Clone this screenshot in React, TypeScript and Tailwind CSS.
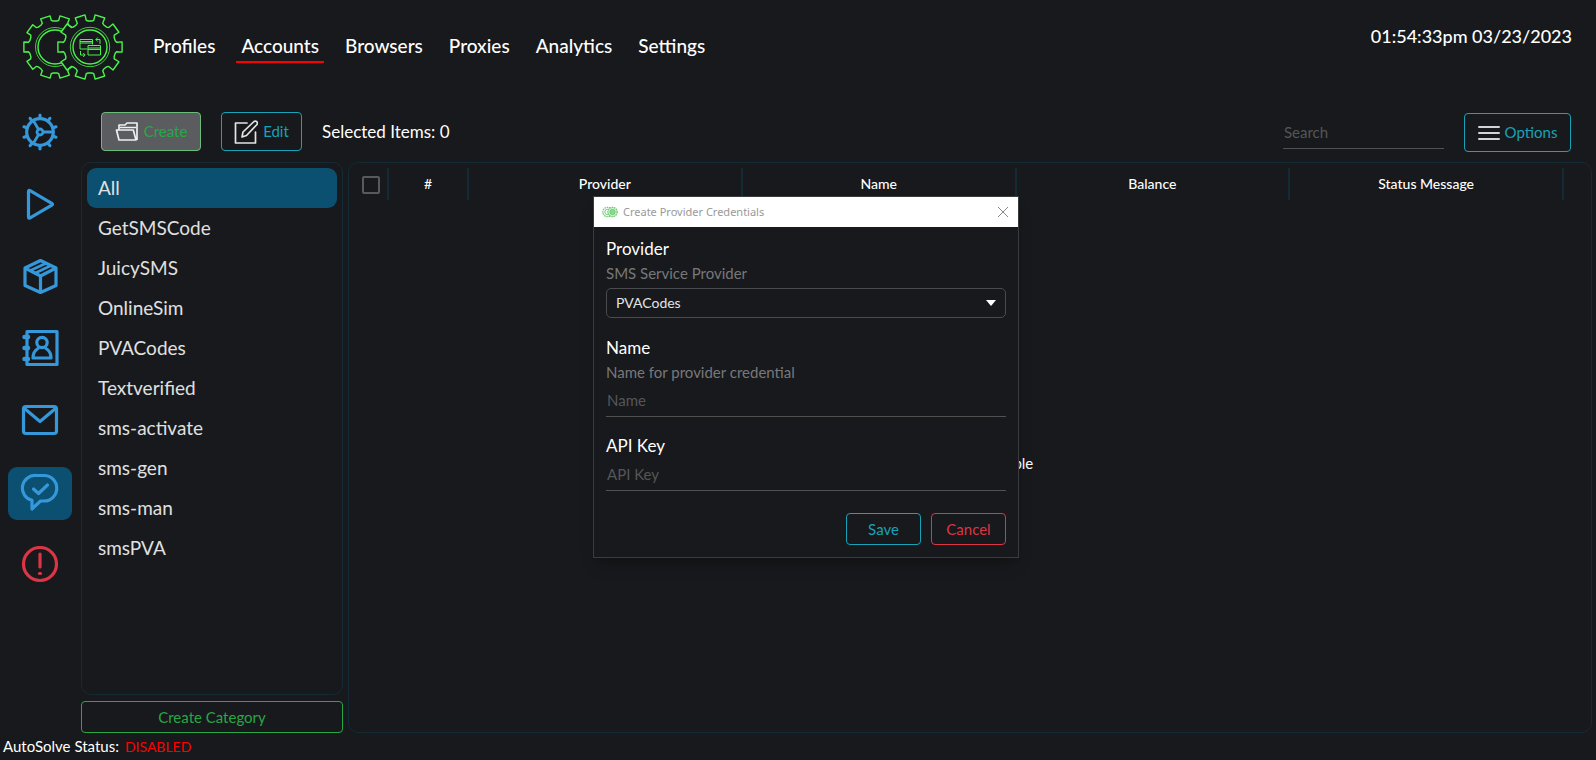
import type { ReactNode } from "react";

const gearPath = (cx: number, cy: number, tip: number, root: number, teeth: number) => {
  const at = (radius: number, degrees: number) => {
    const a = (degrees * Math.PI) / 180;
    return `${(cx + radius * Math.cos(a)).toFixed(2)} ${(cy + radius * Math.sin(a)).toFixed(2)}`;
  };
  const points: string[] = [];
  for (let i = 0; i < teeth; i++) {
    const mid = (i * 360) / teeth;
    points.push(at(root - 1, mid - 14), at(root, mid - 10), at(tip - 0.5, mid - 9), at(tip - 0.5, mid + 9), at(root, mid + 10), at(root - 1, mid + 14));
  }
  return `M${points.join("L")}Z`;
};

function Logo({ className, fill, stroke }: { className: string; fill: string; stroke: string }) {
  return (
    <svg viewBox="0 0 102 66" className={className} fill="none" stroke={stroke} strokeWidth="1.400" strokeLinejoin="round" aria-hidden="true">
      <path d={gearPath(33, 33, 32, 27, 10)} />
      <circle cx="33" cy="33" r="19.5" strokeWidth="0.8" />
      <circle cx="33" cy="33" r="17" />
      <path d={gearPath(68, 33, 33, 27, 10)} fill={fill} />
      <circle cx="68" cy="33" r="19.700" strokeWidth="0.8" />
      <circle cx="68" cy="33" r="17" />
      <path d="M65.500 35h-7.500v-9.500h12.500v5M58 27.500h12.500M58 29h12.500" strokeWidth="1" />
      <path d="M66 31.500h12.500v9.500H66zM66 34h12.500M66 35.500h12.500" strokeWidth="1" />
      <path d="M78 30v-4.500H74M75.800 23.500l-2 2 2 2M58.500 37v4H63M61.200 39l2 2-2 2" strokeWidth="1" />
    </svg>
  );
}

function MiniLogo() {
  return (
    <svg viewBox="0 0 16 12" className="h-3 w-4" fill="none" stroke="#6fcb75" aria-hidden="true">
      <circle cx="5.500" cy="6" r="4.700" strokeDasharray="1.600 0.700" strokeWidth="1.300" />
      <circle cx="5.500" cy="6" r="2.700" />
      <circle cx="10.500" cy="6" r="4.700" strokeDasharray="1.600 0.700" strokeWidth="1.300" fill="#c9f0cb" />
      <circle cx="10.500" cy="6" r="2.500" fill="#8ed993" />
    </svg>
  );
}

function SideIcon({ children, className = "text-[#3498db]" }: { children: ReactNode; className?: string }) {
  return (
    <svg viewBox="0 0 40 40" className={`size-10 ${className}`} fill="none" stroke="currentColor" strokeWidth="3.200" strokeLinecap="round" strokeLinejoin="round" aria-hidden="true">
      {children}
    </svg>
  );
}

const wheelTicks = Array.from({ length: 10 }, (_, i) => {
  const a = ((18 + i * 36) * Math.PI) / 180;
  const c = Math.cos(a);
  const s = Math.sin(a);
  return `M${(20 + c * 14).toFixed(2)} ${(20 + s * 14).toFixed(2)}L${(20 + c * 16.8).toFixed(2)} ${(20 + s * 16.8).toFixed(2)}`;
}).join("");

const sideItems = [
  {
    label: "Tasks",
    icon: (
      <SideIcon>
        <circle cx="20" cy="20" r="13.300" />
        <circle cx="20" cy="20" r="3" strokeWidth="2.800" />
        <path d="M24 20h9M18 16.500 13.400 8.600M18 23.500l-4.600 7.900" strokeWidth="2.800" />
        <path d={wheelTicks} />
      </SideIcon>
    ),
  },
  {
    label: "Run",
    icon: (
      <SideIcon>
        <path d="M8.500 7.500v25.500q0 1.800 1.600.9l21.700-12.700q1.400-.9 0-1.800L10.100 6.600Q8.500 5.700 8.500 7.500z" />
      </SideIcon>
    ),
  },
  {
    label: "Packages",
    icon: (
      <SideIcon>
        <path d="M20.500 4.500 36 12v17.500l-15.500 7L5 29.500V12zM5 12l15.500 8L36 12M20.500 20v16" />
        <path d="M10.500 14.500 26 7.200M15.500 17 31 9.500" strokeWidth="2.800" />
      </SideIcon>
    ),
  },
  {
    label: "Contacts",
    icon: (
      <SideIcon>
        <path d="M7 3.500h30v33H7z" />
        <path d="M4.500 9H8M4.500 20H8M4.500 31H8" strokeWidth="4.500" />
        <circle cx="22" cy="14.500" r="5.200" />
        <path d="M18 20.500q-5 3-5 9.500h18q0-6.500-5-9.500" />
      </SideIcon>
    ),
  },
  {
    label: "Mail",
    icon: (
      <SideIcon>
        <rect x="3.500" y="6.500" width="33" height="27" rx="2.500" />
        <path d="m4.500 8.500 15.500 13 15.500-13" />
      </SideIcon>
    ),
  },
  {
    label: "SMS providers",
    icon: (
      <SideIcon>
        <path d="M16 3.500h8a12.400 12.400 0 0 1 0 25.500h-3.500L12 37V28.300A12.600 12.600 0 0 1 16 3.500z" />
        <path d="m13.500 17 5 4.500 9-8.500" />
      </SideIcon>
    ),
  },
  {
    label: "Alerts",
    icon: (
      <SideIcon className="text-[#dc3545]">
        <circle cx="20" cy="20" r="16.500" />
        <path d="M20 10v13" />
        <path d="M19.500 29.500h1" />
      </SideIcon>
    ),
  },
];

const navItems = ["Profiles", "Accounts", "Browsers", "Proxies", "Analytics", "Settings"];
const categories = ["All", "GetSMSCode", "JuicySMS", "OnlineSim", "PVACodes", "Textverified", "sms-activate", "sms-gen", "sms-man", "smsPVA"];
const columns = ["Provider", "Name", "Balance", "Status Message"];

function CreateDialog() {
  return (
    <section role="dialog" aria-labelledby="dialog-title" className="absolute top-[196px] left-[593px] w-[426px] border border-[#3a3b3e] bg-[#17191c] shadow-lg shadow-black/20">
      <header className="flex h-[30px] items-center bg-white pr-[9px] pl-2">
        <MiniLogo />
        <h2 id="dialog-title" className="ml-[5px] flex-1 font-['Noto_Sans',sans-serif] text-[11px] text-[#999]">Create Provider Credentials</h2>
        <button type="button" aria-label="Close">
          <svg viewBox="0 0 12 12" className="size-3" stroke="#888" fill="none"><path d="m1 1 10 10M11 1 1 11" /></svg>
        </button>
      </header>
      <form className="flex flex-col px-3 pt-2.5 pb-3">
        <label htmlFor="provider" className="text-[17px] leading-6">Provider</label>
        <p className="text-[15px] leading-6 text-[#77787a]">SMS Service Provider</p>
        <div className="relative mt-[3px]">
          <select id="provider" defaultValue="PVACodes" className="h-[30px] w-full appearance-none rounded-[5px] border border-[#4a4b4e] bg-[#17191c] px-[9px] text-sm text-[#e4e4e4]">
            {categories.slice(1).map((c) => <option key={c}>{c}</option>)}
          </select>
          <svg viewBox="0 0 10 6" className="pointer-events-none absolute top-3 right-2.5 h-1.5 w-2.5" fill="#fff"><path d="M0 0h10L5 6z" /></svg>
        </div>
        <label htmlFor="name" className="mt-[18px] text-[17px] leading-6">Name</label>
        <p className="text-[15px] leading-6 text-[#77787a]">Name for provider credential</p>
        <input id="name" placeholder="Name" className="h-[33px] w-full border-b border-[#515151] px-px text-[15px] outline-none placeholder:text-[#555657]" />
        <label htmlFor="api-key" className="mt-[17px] text-[17px] leading-6">API Key</label>
        <input id="api-key" placeholder="API Key" className="h-[33px] w-full border-b border-[#515151] px-px text-[15px] outline-none placeholder:text-[#555657]" />
        <div className="mt-[22px] flex justify-end gap-2.5">
          <button type="button" className="h-8 w-[75px] rounded border border-[#17a2b8] text-[15px] text-[#17a2b8]">Save</button>
          <button type="button" className="h-8 w-[75px] rounded border border-[#dc3545] text-[15px] text-[#dc3545]">Cancel</button>
        </div>
      </form>
    </section>
  );
}

export default function App() {
  return (
    <div className="relative flex h-screen min-h-[640px] flex-col bg-[#17191c] font-[Lato,sans-serif] text-white">
      <header className="flex h-[94px] shrink-0 items-start">
        <Logo className="mt-3.5 ml-[22px] h-[66px] w-[102px]" fill="#17191c" stroke="#4cf24c" />
        <nav className="mt-[30px] ml-6 flex gap-4">
          {navItems.map((item) => (
            <a key={item} href="#" className={`h-[33px] border-b-2 px-[5px] text-[19px] leading-8 font-medium ${item === "Accounts" ? "border-[#f00]" : "border-transparent"}`}>{item}</a>
          ))}
        </nav>
        <time className="mt-5 mr-6 ml-auto text-lg leading-8 font-medium">01:54:33pm 03/23/2023</time>
      </header>

      <div className="flex min-h-0 flex-1">
        <aside className="flex w-[81px] shrink-0 flex-col gap-[19px] pt-[13px] pl-2">
          {sideItems.map(({ label, icon }) => (
            <button key={label} type="button" aria-label={label} className={`flex h-[53px] w-16 items-center justify-center rounded-[9px] pb-[3px] ${label === "SMS providers" ? "bg-[#0b4f71]" : ""}`}>{icon}</button>
          ))}
        </aside>

        <div className="flex min-w-0 flex-1 flex-col pr-1">
          <div className="flex h-[68px] items-center pr-[21px] pl-5">
            <button type="button" className="mt-[7px] flex h-[39px] w-[100px] items-center justify-center gap-[5px] rounded border border-[#69bd79] bg-[#5b5c60] text-[15px] text-[#28a745]">
              <svg viewBox="0 0 24 24" className="size-6" fill="none" stroke="#efefef" strokeWidth="1.700" strokeLinejoin="round"><path d="M4 10V5h6l2-2h10v17M4 20 1.500 10h16.800L21 20H4zM5 7.500h16" /></svg>
              Create
            </button>
            <button type="button" className="mt-[7px] ml-5 flex h-[39px] w-[81px] items-center justify-center gap-[5px] rounded border border-[#17a2b8] text-[15px] text-[#17a2b8]">
              <svg viewBox="0 0 24 24" className="size-6" fill="none" stroke="#e4e4e4" strokeWidth="1.700" strokeLinejoin="round" strokeLinecap="round"><path d="M13 3H1.500v20h20V12" /><path d="m8 17 1-5L20 1.500q1.500-1 2.700.2t.3 2.800L12.500 15.500z" /></svg>
              Edit
            </button>
            <p className="mt-[7px] ml-5 text-[17px]">Selected Items: 0</p>
            <input aria-label="Search" placeholder="Search" className="mt-[9px] ml-auto h-[33px] w-[161px] border-b border-[#515151] px-px text-[15px] outline-none placeholder:text-[#555657]" />
            <button type="button" className="mt-[9px] ml-5 flex h-[39px] w-[107px] items-center justify-center gap-[5px] rounded border border-[#17a2b8] text-[15px] text-[#17a2b8]">
              <svg viewBox="0 0 22 16" className="h-4 w-[22px]" stroke="#d4d4d4" strokeWidth="2" strokeLinecap="round"><path d="M1 2h20M1 8h20M1 14h20" /></svg>
              Options
            </button>
          </div>

          <main className="flex min-h-0 flex-1 gap-[5px]">
            <div className="flex w-[262px] shrink-0 flex-col gap-1.5">
              <ul className="flex-1 rounded-[10px] border border-[#142a34] p-[5px]">
                {categories.map((c) => (
                  <li key={c}>
                    <button type="button" className={`h-10 w-full rounded-[9px] px-[11px] text-left text-[19px] text-[#e0e0e0] ${c === "All" ? "bg-[#0b4f71]" : ""}`}>{c}</button>
                  </li>
                ))}
              </ul>
              <button type="button" className="h-8 shrink-0 rounded border border-[#28a745] text-[15px] text-[#28a745]">Create Category</button>
            </div>

            <div className="flex min-w-0 flex-1 flex-col rounded-[10px] border border-[#142a34] p-[5px]">
              <table className="w-full table-fixed border-separate border-spacing-0 text-sm font-medium">
                <thead>
                  <tr className="h-8">
                    <th scope="col" className="w-[35px] border-r-2 border-[#142a34] p-0">
                      <input type="checkbox" aria-label="Select all" className="mt-0.5 ml-2 block size-[18px] appearance-none rounded-xs border-2 border-[#59595b]" />
                    </th>
                    <th scope="col" className="w-20 border-r-2 border-[#142a34] p-0 font-medium">#</th>
                    {columns.map((c) => (
                      <th key={c} scope="col" className="border-r-2 border-[#142a34] p-0 font-medium">{c}</th>
                    ))}
                    <td className="w-[22px]" />
                  </tr>
                </thead>
              </table>
              <p className="flex flex-1 items-center justify-center text-[15px]">No content in table</p>
            </div>
          </main>
        </div>
      </div>

      <footer className="flex h-[27px] shrink-0 items-center gap-1.5 pl-[3px]">
        <span className="text-[15px]">AutoSolve Status:</span>
        <span className="text-sm text-[#f00]">DISABLED</span>
      </footer>

      <CreateDialog />
    </div>
  );
}
